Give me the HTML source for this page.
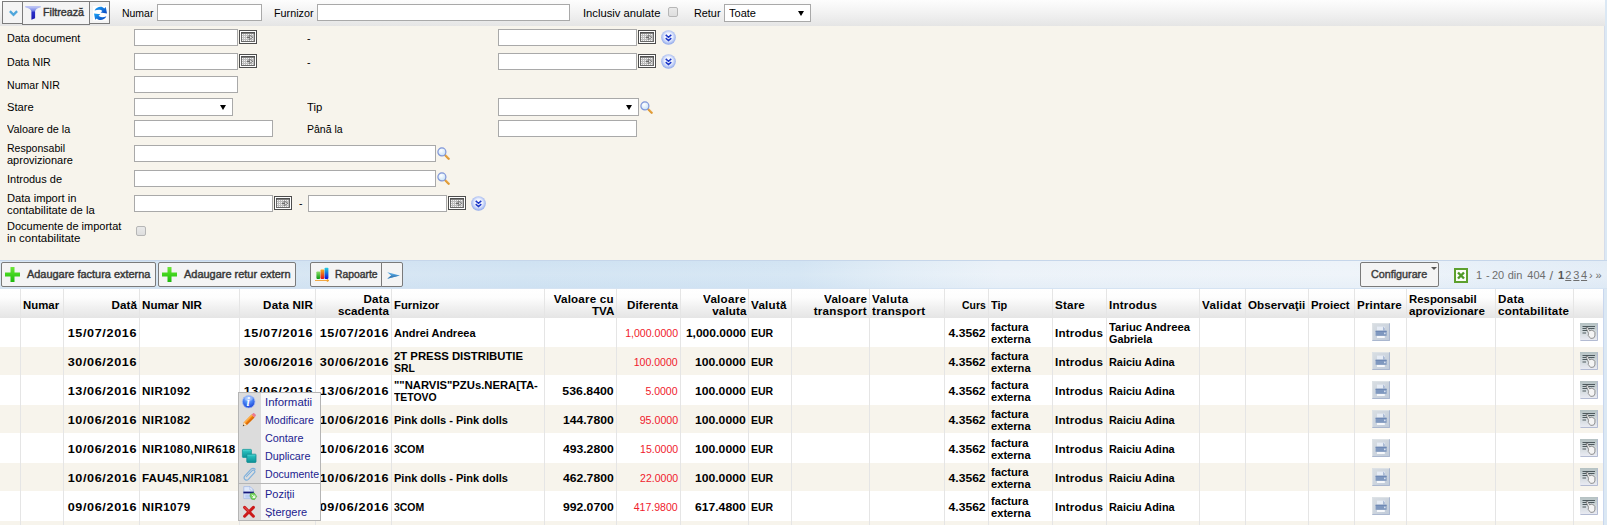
<!DOCTYPE html>
<html><head><meta charset="utf-8"><title>NIR</title><style>
*{box-sizing:border-box;}
html,body{margin:0;padding:0;}
body{width:1607px;height:525px;overflow:hidden;position:relative;background:#dbe8f4;font-family:"Liberation Sans",sans-serif;font-size:10px;color:#000;}
#page{position:absolute;left:0;top:0;width:1607px;height:525px;overflow:hidden;}
#topbar{position:absolute;left:0;top:0;width:1605px;height:26px;background:linear-gradient(to bottom,#fdfdfd 0%,#f3f3f3 45%,#e5e5e5 100%);}
#filter{position:absolute;left:0;top:26px;width:1605px;height:234px;background:#f7f4ec;border-right:1px solid #d5dcea;}
#bluebar{position:absolute;left:0;top:260px;width:1607px;height:29px;background:linear-gradient(to bottom,rgba(255,255,255,0) 0%,rgba(255,255,255,0.12) 50%,rgba(200,220,240,0.15) 100%),linear-gradient(to right,#dbe8f4 0px,#d4e4f2 150px,#d2e3f2 400px,#cfe2f2 520px,#d2e4f3 800px,#e0ecf6 900px,#eaf1f8 1000px,#edf3f9 1350px,#e6eff8 1500px,#e2ecf6 1607px);border-top:1px solid #c6d6ea;border-bottom:1px solid #d5e3f2;}
.lbl{position:absolute;white-space:nowrap;font-size:10px;line-height:12px;color:#000;}
.inp{position:absolute;background:#fff;border:1px solid #a9a9a9;height:17px;}
.sel{position:absolute;background:#fff;border:1px solid #a9a9a9;height:18px;}
.sel:after{content:"";position:absolute;right:6px;top:6px;border-left:3px solid transparent;border-right:3px solid transparent;border-top:5px solid #000;}
.chk{position:absolute;width:10px;height:10px;border:1px solid #b6b6b6;border-radius:2px;background:linear-gradient(#e9e9e9,#dedede);}
.btn{position:absolute;border:1px solid #7a7a7a;border-radius:2px;background:#f4f4f4;}
.btn.tb{border-radius:0;background:#f4f4f4;border-color:#7c7c7c;}
.btn .t{position:absolute;white-space:nowrap;font-size:10px;line-height:12px;color:#3a3a3a;-webkit-text-stroke:0.4px #3a3a3a;}
svg{position:absolute;overflow:visible;}
.x{display:inline-block;white-space:nowrap;}
#grid{position:absolute;left:0;top:289px;width:1603px;height:236px;background:#fff;overflow:hidden;}
.hd{position:absolute;left:0;top:0;width:1604px;height:29px;background:linear-gradient(to bottom,#ffffff 0%,#fdfdfd 30%,#f1f1f1 62%,#e5e5e5 100%);}
.row{position:absolute;left:0;width:1604px;height:29px;}
.row.alt{background:#f7f4ec;height:28px;}
.vl{position:absolute;top:0;width:1px;height:236px;background:#e5e5e5;}
.c{position:absolute;font-weight:bold;font-size:10px;line-height:12px;white-space:nowrap;color:#000;}
.r{text-align:right;}
.red{color:#f0202c;font-weight:normal;}
.pg{position:absolute;top:8px;font-size:11px;line-height:13px;color:#6e6e6e;white-space:nowrap;}
#menu{position:absolute;left:238px;top:392px;width:83px;height:129px;background:#f9f9f9;border:1px solid #b5b5b5;}
#menu .strip{position:absolute;left:0;top:0;width:22px;height:127px;background:#dcdcdc;}
#menu .mi{position:absolute;left:26px;font-size:10px;line-height:12px;color:#22228f;white-space:nowrap;}
#menu .sep{position:absolute;left:0;top:90px;width:81px;height:1px;background:#b5b5b5;}
</style></head><body><div id="page">
<div id="topbar">
<div class="btn tb" style="left:2px;top:1px;width:21px;height:23px"><svg style="left:6px;top:8px" width="9" height="7" viewBox="0 0 9 7"><path d="M0.9 1.1L4.5 4.9L8.1 1.1" fill="none" stroke="#4fa6db" stroke-width="2.3"/></svg></div>
<div class="btn tb" style="left:89px;top:1px;width:21px;height:23px"><svg style="left:3px;top:3.5px" width="15" height="15" viewBox="0 0 15 15"><defs><linearGradient id="rg" x1="0" y1="0" x2="1" y2="1"><stop offset="0" stop-color="#1aa4f6"/><stop offset="1" stop-color="#0a44c0"/></linearGradient><linearGradient id="rg2" x1="0" y1="0" x2="1" y2="1"><stop offset="0" stop-color="#1aa4f6"/><stop offset="1" stop-color="#0a44c0"/></linearGradient></defs><rect x="0" y="0" width="14.5" height="14.6" fill="#fff"/>
<path d="M1.6 4.6C3.6 0.4 9 -0.2 11.2 2.4L12.8 1L14 7.4L7.6 6.6L9.4 5C8 3.2 4.4 3.4 1.6 4.6z" fill="url(#rg)"/>
<path d="M13.4 10.2C11.4 14.4 6 15 3.8 12.4L2.2 13.8L1 7.4L7.4 8.2L5.6 9.8C7 11.6 10.6 11.4 13.4 10.2z" fill="url(#rg2)"/>
</svg></div>
<div class="btn tb" style="left:22px;top:1px;width:68px;height:24px"><svg style="left:2px;top:4px" width="16" height="14" viewBox="0 0 16 14"><defs><linearGradient id="fg" x1="0" y1="0" x2="0" y2="1"><stop offset="0" stop-color="#c9d0f7"/><stop offset="0.3" stop-color="#7f8cea"/><stop offset="0.45" stop-color="#2a2fc8"/><stop offset="1" stop-color="#1c1cb0"/></linearGradient></defs><path d="M0.2 0.3H15.8L15.6 1.2C12.6 2 10.4 3.2 10.1 5.2V12.2L6.4 13.7V5.2C6.1 3.2 3.4 2 0.4 1.2z" fill="url(#fg)"/><path d="M0.2 0.3H15.8L15.5 1.3H0.5z" fill="#b4bdf2"/></svg><span class="t" style="left:19.5px;top:5px;color:#333"><span class="x" style="transform:scaleX(1.069);transform-origin:0 50%;">Filtrează</span></span></div>
<div class="lbl" style="left:122px;top:8px;"><span class="x" style="transform:scaleX(1.046);transform-origin:0 50%;">Numar</span></div>
<div class="inp" style="left:157px;top:4px;width:105px"></div>
<div class="lbl" style="left:274px;top:8px;"><span class="x" style="transform:scaleX(1.077);transform-origin:0 50%;">Furnizor</span></div>
<div class="inp" style="left:317px;top:4px;width:253px"></div>
<div class="lbl" style="left:583px;top:8px;"><span class="x" style="transform:scaleX(1.124);transform-origin:0 50%;">Inclusiv anulate</span></div>
<div class="chk" style="left:668px;top:7px"></div>
<div class="lbl" style="left:694px;top:8px;"><span class="x" style="transform:scaleX(1.084);transform-origin:0 50%;">Retur</span></div>
<div class="sel" style="left:724px;top:4px;width:87px"><span class="lbl" style="left:4px;top:3px"><span class="x" style="transform:scaleX(1.103);transform-origin:0 50%;">Toate</span></span></div>
</div>
<div id="filter">
<div class="lbl" style="left:7px;top:7px;"><span class="x" style="transform:scaleX(1.081);transform-origin:0 50%;">Data document</span></div>
<div class="inp" style="left:134px;top:3px;width:104px;height:17px"></div>
<svg style="left:239px;top:4px" width="18" height="14" viewBox="0 0 18 14"><rect x="0.5" y="0.5" width="17" height="13" fill="#ffffff" stroke="#4d4d4d"/><rect x="2.5" y="2.5" width="13" height="9" fill="#f4f4f4" stroke="#6a6a6a"/><rect x="2" y="2" width="14" height="1.7" fill="#505050"/><path d="M3 5.5H15M3 7.5H15M3 9.5H15M4.5 4V11M6.5 4V11M8.5 4V11M10.5 4V11M12.5 4V11M14.5 4V11" stroke="#bdbdbd" stroke-width="1" fill="none"/><path d="M10.2 5L14 7.3L10.2 9.6z" fill="#e4e4e4" stroke="#707070" stroke-width="0.9"/><path d="M8 7.3h3" stroke="#606060" stroke-width="1.1"/></svg>
<div class="lbl" style="left:307px;top:7px;"><span class="x" style="transform:scaleX(1.05);transform-origin:0 50%;">-</span></div>
<div class="inp" style="left:498px;top:3px;width:139px;height:17px"></div>
<svg style="left:638px;top:4px" width="18" height="14" viewBox="0 0 18 14"><rect x="0.5" y="0.5" width="17" height="13" fill="#ffffff" stroke="#4d4d4d"/><rect x="2.5" y="2.5" width="13" height="9" fill="#f4f4f4" stroke="#6a6a6a"/><rect x="2" y="2" width="14" height="1.7" fill="#505050"/><path d="M3 5.5H15M3 7.5H15M3 9.5H15M4.5 4V11M6.5 4V11M8.5 4V11M10.5 4V11M12.5 4V11M14.5 4V11" stroke="#bdbdbd" stroke-width="1" fill="none"/><path d="M10.2 5L14 7.3L10.2 9.6z" fill="#e4e4e4" stroke="#707070" stroke-width="0.9"/><path d="M8 7.3h3" stroke="#606060" stroke-width="1.1"/></svg>
<svg style="left:661px;top:4px" width="15" height="15" viewBox="0 0 15 15"><defs><radialGradient id="g1" cx="50%" cy="45%" r="52%"><stop offset="0" stop-color="#ffffff"/><stop offset="0.5" stop-color="#eef2fd"/><stop offset="0.78" stop-color="#bccbf5"/><stop offset="1" stop-color="#94abeb"/></radialGradient></defs><circle cx="7.5" cy="7.5" r="7.3" fill="url(#g1)"/><path d="M4.7 4.9L7.5 7.4L10.3 4.9M4.7 8.1L7.5 10.6L10.3 8.1" fill="none" stroke="#1b36c6" stroke-width="1.45"/></svg>
<div class="lbl" style="left:7px;top:31px;"><span class="x" style="transform:scaleX(1.065);transform-origin:0 50%;">Data NIR</span></div>
<div class="inp" style="left:134px;top:27px;width:104px;height:17px"></div>
<svg style="left:239px;top:28px" width="18" height="14" viewBox="0 0 18 14"><rect x="0.5" y="0.5" width="17" height="13" fill="#ffffff" stroke="#4d4d4d"/><rect x="2.5" y="2.5" width="13" height="9" fill="#f4f4f4" stroke="#6a6a6a"/><rect x="2" y="2" width="14" height="1.7" fill="#505050"/><path d="M3 5.5H15M3 7.5H15M3 9.5H15M4.5 4V11M6.5 4V11M8.5 4V11M10.5 4V11M12.5 4V11M14.5 4V11" stroke="#bdbdbd" stroke-width="1" fill="none"/><path d="M10.2 5L14 7.3L10.2 9.6z" fill="#e4e4e4" stroke="#707070" stroke-width="0.9"/><path d="M8 7.3h3" stroke="#606060" stroke-width="1.1"/></svg>
<div class="lbl" style="left:307px;top:31px;"><span class="x" style="transform:scaleX(1.05);transform-origin:0 50%;">-</span></div>
<div class="inp" style="left:498px;top:27px;width:139px;height:17px"></div>
<svg style="left:638px;top:28px" width="18" height="14" viewBox="0 0 18 14"><rect x="0.5" y="0.5" width="17" height="13" fill="#ffffff" stroke="#4d4d4d"/><rect x="2.5" y="2.5" width="13" height="9" fill="#f4f4f4" stroke="#6a6a6a"/><rect x="2" y="2" width="14" height="1.7" fill="#505050"/><path d="M3 5.5H15M3 7.5H15M3 9.5H15M4.5 4V11M6.5 4V11M8.5 4V11M10.5 4V11M12.5 4V11M14.5 4V11" stroke="#bdbdbd" stroke-width="1" fill="none"/><path d="M10.2 5L14 7.3L10.2 9.6z" fill="#e4e4e4" stroke="#707070" stroke-width="0.9"/><path d="M8 7.3h3" stroke="#606060" stroke-width="1.1"/></svg>
<svg style="left:661px;top:28px" width="15" height="15" viewBox="0 0 15 15"><defs><radialGradient id="g2" cx="50%" cy="45%" r="52%"><stop offset="0" stop-color="#ffffff"/><stop offset="0.5" stop-color="#eef2fd"/><stop offset="0.78" stop-color="#bccbf5"/><stop offset="1" stop-color="#94abeb"/></radialGradient></defs><circle cx="7.5" cy="7.5" r="7.3" fill="url(#g2)"/><path d="M4.7 4.9L7.5 7.4L10.3 4.9M4.7 8.1L7.5 10.6L10.3 8.1" fill="none" stroke="#1b36c6" stroke-width="1.45"/></svg>
<div class="lbl" style="left:7px;top:54px;"><span class="x" style="transform:scaleX(1.056);transform-origin:0 50%;">Numar NIR</span></div>
<div class="inp" style="left:134px;top:50px;width:104px;height:17px"></div>
<div class="lbl" style="left:7px;top:76px;"><span class="x" style="transform:scaleX(1.117);transform-origin:0 50%;">Stare</span></div>
<div class="sel" style="left:134px;top:72px;width:99px"></div>
<div class="lbl" style="left:307px;top:76px;"><span class="x" style="transform:scaleX(1.131);transform-origin:0 50%;">Tip</span></div>
<div class="sel" style="left:498px;top:72px;width:141px"></div>
<svg style="left:639.5px;top:75px" width="13" height="13" viewBox="0 0 13 13"><defs><radialGradient id="g3" cx="40%" cy="35%" r="70%"><stop offset="0" stop-color="#ffffff"/><stop offset="1" stop-color="#c4e0f7"/></radialGradient></defs><path d="M8 8L11.7 11.7" stroke="#dd962f" stroke-width="2.3" stroke-linecap="round"/><path d="M8.3 7.6L11.9 11.2" stroke="#f3c070" stroke-width="0.7" stroke-linecap="round"/><circle cx="4.9" cy="4.9" r="4" fill="url(#g3)" stroke="#7f95d8" stroke-width="1.2"/></svg>
<div class="lbl" style="left:7px;top:98px;"><span class="x" style="transform:scaleX(1.088);transform-origin:0 50%;">Valoare de la</span></div>
<div class="inp" style="left:134px;top:94px;width:139px;height:17px"></div>
<div class="lbl" style="left:307px;top:98px;"><span class="x" style="transform:scaleX(1.052);transform-origin:0 50%;">Până la</span></div>
<div class="inp" style="left:498px;top:94px;width:139px;height:17px"></div>
<div class="lbl" style="left:7px;top:117px;"><span class="x" style="transform:scaleX(1.054);transform-origin:0 50%;">Responsabil</span><br><span class="x" style="transform:scaleX(1.099);transform-origin:0 50%;">aprovizionare</span></div>
<div class="inp" style="left:134px;top:119px;width:302px;height:17px"></div>
<svg style="left:437px;top:121px" width="13" height="13" viewBox="0 0 13 13"><defs><radialGradient id="g4" cx="40%" cy="35%" r="70%"><stop offset="0" stop-color="#ffffff"/><stop offset="1" stop-color="#c4e0f7"/></radialGradient></defs><path d="M8 8L11.7 11.7" stroke="#dd962f" stroke-width="2.3" stroke-linecap="round"/><path d="M8.3 7.6L11.9 11.2" stroke="#f3c070" stroke-width="0.7" stroke-linecap="round"/><circle cx="4.9" cy="4.9" r="4" fill="url(#g4)" stroke="#7f95d8" stroke-width="1.2"/></svg>
<div class="lbl" style="left:7px;top:148px;"><span class="x" style="transform:scaleX(1.099);transform-origin:0 50%;">Introdus de</span></div>
<div class="inp" style="left:134px;top:144px;width:302px;height:17px"></div>
<svg style="left:437px;top:146px" width="13" height="13" viewBox="0 0 13 13"><defs><radialGradient id="g5" cx="40%" cy="35%" r="70%"><stop offset="0" stop-color="#ffffff"/><stop offset="1" stop-color="#c4e0f7"/></radialGradient></defs><path d="M8 8L11.7 11.7" stroke="#dd962f" stroke-width="2.3" stroke-linecap="round"/><path d="M8.3 7.6L11.9 11.2" stroke="#f3c070" stroke-width="0.7" stroke-linecap="round"/><circle cx="4.9" cy="4.9" r="4" fill="url(#g5)" stroke="#7f95d8" stroke-width="1.2"/></svg>
<div class="lbl" style="left:7px;top:167px;"><span class="x" style="transform:scaleX(1.115);transform-origin:0 50%;">Data import in</span><br><span class="x" style="transform:scaleX(1.128);transform-origin:0 50%;">contabilitate de la</span></div>
<div class="inp" style="left:134px;top:169px;width:139px;height:17px"></div>
<svg style="left:274px;top:170px" width="18" height="14" viewBox="0 0 18 14"><rect x="0.5" y="0.5" width="17" height="13" fill="#ffffff" stroke="#4d4d4d"/><rect x="2.5" y="2.5" width="13" height="9" fill="#f4f4f4" stroke="#6a6a6a"/><rect x="2" y="2" width="14" height="1.7" fill="#505050"/><path d="M3 5.5H15M3 7.5H15M3 9.5H15M4.5 4V11M6.5 4V11M8.5 4V11M10.5 4V11M12.5 4V11M14.5 4V11" stroke="#bdbdbd" stroke-width="1" fill="none"/><path d="M10.2 5L14 7.3L10.2 9.6z" fill="#e4e4e4" stroke="#707070" stroke-width="0.9"/><path d="M8 7.3h3" stroke="#606060" stroke-width="1.1"/></svg>
<div class="lbl" style="left:299px;top:172px;"><span class="x" style="transform:scaleX(1.05);transform-origin:0 50%;">-</span></div>
<div class="inp" style="left:308px;top:169px;width:139px;height:17px"></div>
<svg style="left:448px;top:170px" width="18" height="14" viewBox="0 0 18 14"><rect x="0.5" y="0.5" width="17" height="13" fill="#ffffff" stroke="#4d4d4d"/><rect x="2.5" y="2.5" width="13" height="9" fill="#f4f4f4" stroke="#6a6a6a"/><rect x="2" y="2" width="14" height="1.7" fill="#505050"/><path d="M3 5.5H15M3 7.5H15M3 9.5H15M4.5 4V11M6.5 4V11M8.5 4V11M10.5 4V11M12.5 4V11M14.5 4V11" stroke="#bdbdbd" stroke-width="1" fill="none"/><path d="M10.2 5L14 7.3L10.2 9.6z" fill="#e4e4e4" stroke="#707070" stroke-width="0.9"/><path d="M8 7.3h3" stroke="#606060" stroke-width="1.1"/></svg>
<svg style="left:471px;top:170px" width="15" height="15" viewBox="0 0 15 15"><defs><radialGradient id="g6" cx="50%" cy="45%" r="52%"><stop offset="0" stop-color="#ffffff"/><stop offset="0.5" stop-color="#eef2fd"/><stop offset="0.78" stop-color="#bccbf5"/><stop offset="1" stop-color="#94abeb"/></radialGradient></defs><circle cx="7.5" cy="7.5" r="7.3" fill="url(#g6)"/><path d="M4.7 4.9L7.5 7.4L10.3 4.9M4.7 8.1L7.5 10.6L10.3 8.1" fill="none" stroke="#1b36c6" stroke-width="1.45"/></svg>
<div class="lbl" style="left:7px;top:195px;"><span class="x" style="transform:scaleX(1.1);transform-origin:0 50%;">Documente de importat</span><br><span class="x" style="transform:scaleX(1.148);transform-origin:0 50%;">in contabilitate</span></div>
<div class="chk" style="left:136px;top:200px"></div>
</div>
<div id="bluebar">
<div class="btn" style="left:1px;top:1px;width:155px;height:25px;"><svg style="left:3px;top:4px" width="15" height="15" viewBox="0 0 15 15"><defs><linearGradient id="g7" x1="0" y1="0" x2="0" y2="1"><stop offset="0" stop-color="#6fe63a"/><stop offset="0.5" stop-color="#3fd41c"/><stop offset="1" stop-color="#1fb80e"/></linearGradient></defs><path d="M5.5 0h4v5.5H15v4H9.5V15h-4V9.5H0v-4h5.5z" fill="url(#g7)"/></svg><span class="t" style="left:25px;top:6px;color:#333"><span class="x" style="transform:scaleX(1.093);transform-origin:0 50%;">Adaugare factura externa</span></span></div>
<div class="btn" style="left:158px;top:1px;width:138px;height:25px;"><svg style="left:3px;top:4px" width="15" height="15" viewBox="0 0 15 15"><defs><linearGradient id="g8" x1="0" y1="0" x2="0" y2="1"><stop offset="0" stop-color="#6fe63a"/><stop offset="0.5" stop-color="#3fd41c"/><stop offset="1" stop-color="#1fb80e"/></linearGradient></defs><path d="M5.5 0h4v5.5H15v4H9.5V15h-4V9.5H0v-4h5.5z" fill="url(#g8)"/></svg><span class="t" style="left:25px;top:6px;color:#333"><span class="x" style="transform:scaleX(1.096);transform-origin:0 50%;">Adaugare retur extern</span></span></div>
<div class="btn" style="left:310px;top:1px;width:72px;height:25px;border-radius:2px 0 0 2px"><svg style="left:4px;top:4px" width="15" height="15" viewBox="0 0 15 15"><defs><linearGradient id="c1" x1="0" y1="0" x2="0" y2="1"><stop offset="0" stop-color="#8fe06a"/><stop offset="1" stop-color="#0a9a10"/></linearGradient><linearGradient id="c2" x1="0" y1="0" x2="0" y2="1"><stop offset="0" stop-color="#f6b020"/><stop offset="1" stop-color="#e81010"/></linearGradient><linearGradient id="c3" x1="0" y1="0" x2="0" y2="1"><stop offset="0" stop-color="#22d0e0"/><stop offset="1" stop-color="#1010d8"/></linearGradient></defs><rect x="1.4" y="4.5" width="3.8" height="7.4" rx="0.8" fill="url(#c1)"/><rect x="5.5" y="2.6" width="3.8" height="9.3" rx="0.8" fill="url(#c2)"/><rect x="9.6" y="0.8" width="3.8" height="11.1" rx="0.8" fill="url(#c3)"/><path d="M0 13.5H12.6M12 12.6L14 13.5L12 14.4z" stroke="#f0a030" stroke-width="0.9" fill="#f0a030"/></svg><span class="t" style="left:23.5px;top:6px;color:#333"><span class="x" style="transform:scaleX(1.035);transform-origin:0 50%;">Rapoarte</span></span></div>
<div class="btn" style="left:381px;top:1px;width:22px;height:25px;border-radius:0 2px 2px 0"><svg style="left:4.5px;top:8.5px" width="13" height="7" viewBox="0 0 13 7"><path d="M0.3 0.2L12.8 3.4L0.3 6.8L4.2 3.5z" fill="#4f9fda"/><path d="M4.2 3.5L12.8 3.4L0.3 6.8z" fill="#3d7fb8"/></svg></div>
<div class="btn" style="left:1360px;top:1px;width:79px;height:25px;"><span class="t" style="left:10px;top:6px;color:#444"><span class="x" style="transform:scaleX(1.075);transform-origin:0 50%;">Configurare</span></span><svg style="left:70px;top:4px" width="6" height="3" viewBox="0 0 6 3"><path d="M0 0H6L3 3z" fill="#555"/></svg></div>
<svg style="left:1454px;top:7px" width="14" height="15" viewBox="0 0 14 15"><rect x="1" y="1" width="12" height="13" fill="#fbfdf9" stroke="#5da02e" stroke-width="2"/><path d="M4 4.5L10 10.5M10 4.5L4 10.5" stroke="#4e9a28" stroke-width="2.4"/></svg>
<div class="pg" style="left:1476.1px;">1</div>
<div class="pg" style="left:1485.9px;">-</div>
<div class="pg" style="left:1491.9px;">20</div>
<div class="pg" style="left:1507.7px;">din</div>
<div class="pg" style="left:1527.3px;">404</div>
<div class="pg" style="left:1549.5px;font-size:13px;">/</div>
<div class="pg" style="left:1558.0px;font-weight:bold;color:#555;">1</div>
<div class="pg" style="left:1565.2px;text-decoration:underline;">2</div>
<div class="pg" style="left:1573.3px;text-decoration:underline;">3</div>
<div class="pg" style="left:1581.0px;text-decoration:underline;">4</div>
<div class="pg" style="left:1589.1px;">›</div>
<div class="pg" style="left:1595.5px;">»</div>
</div>
<div id="grid">
<div class="hd"></div>
<svg width="0" height="0" style="left:0;top:0"><defs><linearGradient id="pbg" x1="0" y1="0" x2="1" y2="1"><stop offset="0" stop-color="#dadfe3"/><stop offset="1" stop-color="#bfcad9"/></linearGradient><linearGradient id="hbg" x1="0" y1="0" x2="0" y2="1"><stop offset="0" stop-color="#b4c1c2"/><stop offset="0.5" stop-color="#d2d9dd"/><stop offset="1" stop-color="#ecedf5"/></linearGradient></defs></svg>
<div class="row" style="top:29px"></div>
<div class="row alt" style="top:58px"></div>
<div class="row" style="top:87px"></div>
<div class="row alt" style="top:116px"></div>
<div class="row" style="top:145px"></div>
<div class="row alt" style="top:174px"></div>
<div class="row" style="top:203px"></div>
<div class="row alt" style="top:232px"></div>
<div class="vl" style="left:20px"></div>
<div class="vl" style="left:63px"></div>
<div class="vl" style="left:139px"></div>
<div class="vl" style="left:239px"></div>
<div class="vl" style="left:315px"></div>
<div class="vl" style="left:391px"></div>
<div class="vl" style="left:544px"></div>
<div class="vl" style="left:616px"></div>
<div class="vl" style="left:680px"></div>
<div class="vl" style="left:748px"></div>
<div class="vl" style="left:791px"></div>
<div class="vl" style="left:869px"></div>
<div class="vl" style="left:944px"></div>
<div class="vl" style="left:988px"></div>
<div class="vl" style="left:1052px"></div>
<div class="vl" style="left:1106px"></div>
<div class="vl" style="left:1199px"></div>
<div class="vl" style="left:1245px"></div>
<div class="vl" style="left:1308px"></div>
<div class="vl" style="left:1354px"></div>
<div class="vl" style="left:1406px"></div>
<div class="vl" style="left:1495px"></div>
<div class="vl" style="left:1573px"></div>
<div class="vl" style="left:1603px"></div>
<div class="c " style="left:23px;top:10.5px"><span class="x" style="transform:scaleX(1.139);transform-origin:0 50%;">Numar</span></div>
<div class="c r " style="left:63px;width:74px;top:10.5px"><span class="x" style="transform:scaleX(1.16);transform-origin:100% 50%;letter-spacing:0.13px;margin-right:-0.13px;">Dată</span></div>
<div class="c " style="left:142px;top:10.5px"><span class="x" style="transform:scaleX(1.16);transform-origin:0 50%;">Numar NIR</span></div>
<div class="c r " style="left:239px;width:74px;top:10.5px"><span class="x" style="transform:scaleX(1.16);transform-origin:100% 50%;letter-spacing:0.18px;margin-right:-0.18px;">Data NIR</span></div>
<div class="c r " style="left:315px;width:74px;top:4.5px"><span class="x" style="transform:scaleX(1.16);transform-origin:100% 50%;letter-spacing:0.24px;margin-right:-0.24px;">Data</span><br><span class="x" style="transform:scaleX(1.16);transform-origin:100% 50%;letter-spacing:0.09px;margin-right:-0.09px;">scadenta</span></div>
<div class="c " style="left:394px;top:10.5px"><span class="x" style="transform:scaleX(1.132);transform-origin:0 50%;">Furnizor</span></div>
<div class="c r " style="left:544px;width:70px;top:4.5px"><span class="x" style="transform:scaleX(1.16);transform-origin:100% 50%;letter-spacing:0.17px;margin-right:-0.17px;">Valoare cu</span><br><span class="x" style="transform:scaleX(1.16);transform-origin:100% 50%;letter-spacing:0.02px;margin-right:-0.02px;">TVA</span></div>
<div class="c r " style="left:616px;width:62px;top:10.5px"><span class="x" style="transform:scaleX(1.16);transform-origin:100% 50%;letter-spacing:0.08px;margin-right:-0.08px;">Diferenta</span></div>
<div class="c r " style="left:680px;width:66px;top:4.5px"><span class="x" style="transform:scaleX(1.16);transform-origin:100% 50%;letter-spacing:0.22px;margin-right:-0.22px;">Valoare</span><br><span class="x" style="transform:scaleX(1.16);transform-origin:100% 50%;letter-spacing:0.1px;margin-right:-0.1px;">valuta</span></div>
<div class="c " style="left:751px;top:10.5px"><span class="x" style="transform:scaleX(1.16);transform-origin:0 50%;letter-spacing:0.24px;">Valută</span></div>
<div class="c r " style="left:791px;width:76px;top:4.5px"><span class="x" style="transform:scaleX(1.16);transform-origin:100% 50%;letter-spacing:0.22px;margin-right:-0.22px;">Valoare</span><br><span class="x" style="transform:scaleX(1.16);transform-origin:100% 50%;letter-spacing:0.23px;margin-right:-0.23px;">transport</span></div>
<div class="c " style="left:872px;top:4.5px"><span class="x" style="transform:scaleX(1.16);transform-origin:0 50%;letter-spacing:0.33px;">Valuta</span><br><span class="x" style="transform:scaleX(1.16);transform-origin:0 50%;letter-spacing:0.23px;">transport</span></div>
<div class="c r " style="left:944px;width:42px;top:10.5px"><span class="x" style="transform:scaleX(1.04);transform-origin:100% 50%;">Curs</span></div>
<div class="c " style="left:991px;top:10.5px"><span class="x" style="transform:scaleX(1.093);transform-origin:0 50%;">Tip</span></div>
<div class="c " style="left:1055px;top:10.5px"><span class="x" style="transform:scaleX(1.16);transform-origin:0 50%;letter-spacing:0.17px;">Stare</span></div>
<div class="c " style="left:1109px;top:10.5px"><span class="x" style="transform:scaleX(1.16);transform-origin:0 50%;letter-spacing:0.18px;">Introdus</span></div>
<div class="c " style="left:1202px;top:10.5px"><span class="x" style="transform:scaleX(1.16);transform-origin:0 50%;letter-spacing:0.29px;">Validat</span></div>
<div class="c " style="left:1248px;top:10.5px"><span class="x" style="transform:scaleX(1.16);transform-origin:0 50%;letter-spacing:0.05px;">Observaţii</span></div>
<div class="c " style="left:1311px;top:10.5px"><span class="x" style="transform:scaleX(1.138);transform-origin:0 50%;">Proiect</span></div>
<div class="c " style="left:1357px;top:10.5px"><span class="x" style="transform:scaleX(1.16);transform-origin:0 50%;letter-spacing:0.12px;">Printare</span></div>
<div class="c " style="left:1409px;top:4.5px"><span class="x" style="transform:scaleX(1.138);transform-origin:0 50%;">Responsabil</span><br><span class="x" style="transform:scaleX(1.16);transform-origin:0 50%;letter-spacing:0.03px;">aprovizionare</span></div>
<div class="c " style="left:1498px;top:4.5px"><span class="x" style="transform:scaleX(1.16);transform-origin:0 50%;letter-spacing:0.24px;">Data</span><br><span class="x" style="transform:scaleX(1.16);transform-origin:0 50%;letter-spacing:0.19px;">contabilitate</span></div>
<div class="c r " style="left:63px;width:74px;top:38.5px"><span class="x" style="transform:scaleX(1.26);transform-origin:100% 50%;letter-spacing:0.5px;margin-right:-0.5px;">15/07/2016</span></div>
<div class="c r " style="left:239px;width:74px;top:38.5px"><span class="x" style="transform:scaleX(1.26);transform-origin:100% 50%;letter-spacing:0.5px;margin-right:-0.5px;">15/07/2016</span></div>
<div class="c r " style="left:315px;width:74px;top:38.5px"><span class="x" style="transform:scaleX(1.26);transform-origin:100% 50%;letter-spacing:0.5px;margin-right:-0.5px;">15/07/2016</span></div>
<div class="c " style="left:394px;top:38.5px"><span class="x" style="transform:scaleX(1.1);transform-origin:0 50%;">Andrei Andreea</span></div>
<div class="c r red" style="left:616px;width:62px;top:38.5px"><span class="x" style="transform:scaleX(1.057);transform-origin:100% 50%;">1,000.0000</span></div>
<div class="c r " style="left:680px;width:66px;top:38.5px"><span class="x" style="transform:scaleX(1.202);transform-origin:100% 50%;">1,000.0000</span></div>
<div class="c " style="left:751px;top:38.5px"><span class="x" style="transform:scaleX(1.051);transform-origin:0 50%;">EUR</span></div>
<div class="c r " style="left:944px;width:42px;top:38.5px"><span class="x" style="transform:scaleX(1.209);transform-origin:100% 50%;">4.3562</span></div>
<div class="c " style="left:991px;top:32.5px"><span class="x" style="transform:scaleX(1.124);transform-origin:0 50%;">factura</span><br><span class="x" style="transform:scaleX(1.113);transform-origin:0 50%;">externa</span></div>
<div class="c " style="left:1055px;top:38.5px"><span class="x" style="transform:scaleX(1.16);transform-origin:0 50%;letter-spacing:0.18px;">Introdus</span></div>
<div class="c " style="left:1109px;top:32.5px"><span class="x" style="transform:scaleX(1.13);transform-origin:0 50%;">Tariuc Andreea</span><br><span class="x" style="transform:scaleX(1.082);transform-origin:0 50%;">Gabriela</span></div>
<svg style="left:1372px;top:34px" width="18" height="18" viewBox="0 0 18 18"><rect x="0" y="0" width="18" height="18" fill="url(#pbg)"/><path d="M0.5 17.5H17.5V0.5" fill="none" stroke="#aab7cf"/><path d="M0.5 17V0.5H17" fill="none" stroke="#dde2e6"/><rect x="5" y="3.6" width="7.8" height="4" fill="#e6ecf5"/><path d="M11 3.6l1.8 1.6v2.4h-1.8z" fill="#a9b9d4"/><rect x="3.6" y="7.8" width="11" height="5" fill="#7f98bf"/><rect x="3.6" y="7.8" width="11" height="1" fill="#6b86b2"/><rect x="12" y="9.6" width="1.6" height="1.6" fill="#d4deee"/><rect x="5" y="13" width="7.8" height="2" fill="#f6f8fb"/></svg>
<svg style="left:1580px;top:34px" width="18" height="18" viewBox="0 0 18 18"><rect x="0" y="0" width="18" height="18" fill="url(#hbg)"/><path d="M0.5 17.5H17.5V0.5" fill="none" stroke="#b3bbd2"/><path d="M2.5 3.5H15M2.5 5.5H14.5M2.5 7.5H7M2.5 10H6" stroke="#4e5a5e" stroke-width="1"/><path d="M6 4.6L7.6 4.4L9.7 8L11.2 7.2L12.6 7.6L13.9 8.1L14.9 9.6V13L13.6 15.1L10.6 15.4L8.2 12.4L8.6 10.3z" fill="#f4f4f4" stroke="#6a6a6a" stroke-width="0.7"/></svg>
<div class="c r " style="left:63px;width:74px;top:67.5px"><span class="x" style="transform:scaleX(1.26);transform-origin:100% 50%;letter-spacing:0.5px;margin-right:-0.5px;">30/06/2016</span></div>
<div class="c r " style="left:239px;width:74px;top:67.5px"><span class="x" style="transform:scaleX(1.26);transform-origin:100% 50%;letter-spacing:0.5px;margin-right:-0.5px;">30/06/2016</span></div>
<div class="c r " style="left:315px;width:74px;top:67.5px"><span class="x" style="transform:scaleX(1.26);transform-origin:100% 50%;letter-spacing:0.5px;margin-right:-0.5px;">30/06/2016</span></div>
<div class="c " style="left:394px;top:61.5px"><span class="x" style="transform:scaleX(1.133);transform-origin:0 50%;">2T PRESS DISTRIBUTIE</span><br><span class="x" style="transform:scaleX(1.04);transform-origin:0 50%;">SRL</span></div>
<div class="c r red" style="left:616px;width:62px;top:67.5px"><span class="x" style="transform:scaleX(1.055);transform-origin:100% 50%;">100.0000</span></div>
<div class="c r " style="left:680px;width:66px;top:67.5px"><span class="x" style="transform:scaleX(1.218);transform-origin:100% 50%;">100.0000</span></div>
<div class="c " style="left:751px;top:67.5px"><span class="x" style="transform:scaleX(1.051);transform-origin:0 50%;">EUR</span></div>
<div class="c r " style="left:944px;width:42px;top:67.5px"><span class="x" style="transform:scaleX(1.209);transform-origin:100% 50%;">4.3562</span></div>
<div class="c " style="left:991px;top:61.5px"><span class="x" style="transform:scaleX(1.124);transform-origin:0 50%;">factura</span><br><span class="x" style="transform:scaleX(1.113);transform-origin:0 50%;">externa</span></div>
<div class="c " style="left:1055px;top:67.5px"><span class="x" style="transform:scaleX(1.16);transform-origin:0 50%;letter-spacing:0.18px;">Introdus</span></div>
<div class="c " style="left:1109px;top:67.5px"><span class="x" style="transform:scaleX(1.09);transform-origin:0 50%;">Raiciu Adina</span></div>
<svg style="left:1372px;top:63px" width="18" height="18" viewBox="0 0 18 18"><rect x="0" y="0" width="18" height="18" fill="url(#pbg)"/><path d="M0.5 17.5H17.5V0.5" fill="none" stroke="#aab7cf"/><path d="M0.5 17V0.5H17" fill="none" stroke="#dde2e6"/><rect x="5" y="3.6" width="7.8" height="4" fill="#e6ecf5"/><path d="M11 3.6l1.8 1.6v2.4h-1.8z" fill="#a9b9d4"/><rect x="3.6" y="7.8" width="11" height="5" fill="#7f98bf"/><rect x="3.6" y="7.8" width="11" height="1" fill="#6b86b2"/><rect x="12" y="9.6" width="1.6" height="1.6" fill="#d4deee"/><rect x="5" y="13" width="7.8" height="2" fill="#f6f8fb"/></svg>
<svg style="left:1580px;top:63px" width="18" height="18" viewBox="0 0 18 18"><rect x="0" y="0" width="18" height="18" fill="url(#hbg)"/><path d="M0.5 17.5H17.5V0.5" fill="none" stroke="#b3bbd2"/><path d="M2.5 3.5H15M2.5 5.5H14.5M2.5 7.5H7M2.5 10H6" stroke="#4e5a5e" stroke-width="1"/><path d="M6 4.6L7.6 4.4L9.7 8L11.2 7.2L12.6 7.6L13.9 8.1L14.9 9.6V13L13.6 15.1L10.6 15.4L8.2 12.4L8.6 10.3z" fill="#f4f4f4" stroke="#6a6a6a" stroke-width="0.7"/></svg>
<div class="c r " style="left:63px;width:74px;top:96.5px"><span class="x" style="transform:scaleX(1.26);transform-origin:100% 50%;letter-spacing:0.5px;margin-right:-0.5px;">13/06/2016</span></div>
<div class="c " style="left:142px;top:96.5px"><span class="x" style="transform:scaleX(1.16);transform-origin:0 50%;letter-spacing:0.36px;">NIR1092</span></div>
<div class="c r " style="left:239px;width:74px;top:96.5px"><span class="x" style="transform:scaleX(1.26);transform-origin:100% 50%;letter-spacing:0.5px;margin-right:-0.5px;">13/06/2016</span></div>
<div class="c r " style="left:315px;width:74px;top:96.5px"><span class="x" style="transform:scaleX(1.26);transform-origin:100% 50%;letter-spacing:0.5px;margin-right:-0.5px;">13/06/2016</span></div>
<div class="c " style="left:394px;top:90.5px"><span class="x" style="transform:scaleX(1.126);transform-origin:0 50%;">""NARVIS"PZUs.NERA[TA-</span><br><span class="x" style="transform:scaleX(1.043);transform-origin:0 50%;">TETOVO</span></div>
<div class="c r " style="left:544px;width:70px;top:96.5px"><span class="x" style="transform:scaleX(1.232);transform-origin:100% 50%;">536.8400</span></div>
<div class="c r red" style="left:616px;width:62px;top:96.5px"><span class="x" style="transform:scaleX(1.053);transform-origin:100% 50%;">5.0000</span></div>
<div class="c r " style="left:680px;width:66px;top:96.5px"><span class="x" style="transform:scaleX(1.218);transform-origin:100% 50%;">100.0000</span></div>
<div class="c " style="left:751px;top:96.5px"><span class="x" style="transform:scaleX(1.051);transform-origin:0 50%;">EUR</span></div>
<div class="c r " style="left:944px;width:42px;top:96.5px"><span class="x" style="transform:scaleX(1.209);transform-origin:100% 50%;">4.3562</span></div>
<div class="c " style="left:991px;top:90.5px"><span class="x" style="transform:scaleX(1.124);transform-origin:0 50%;">factura</span><br><span class="x" style="transform:scaleX(1.113);transform-origin:0 50%;">externa</span></div>
<div class="c " style="left:1055px;top:96.5px"><span class="x" style="transform:scaleX(1.16);transform-origin:0 50%;letter-spacing:0.18px;">Introdus</span></div>
<div class="c " style="left:1109px;top:96.5px"><span class="x" style="transform:scaleX(1.09);transform-origin:0 50%;">Raiciu Adina</span></div>
<svg style="left:1372px;top:92px" width="18" height="18" viewBox="0 0 18 18"><rect x="0" y="0" width="18" height="18" fill="url(#pbg)"/><path d="M0.5 17.5H17.5V0.5" fill="none" stroke="#aab7cf"/><path d="M0.5 17V0.5H17" fill="none" stroke="#dde2e6"/><rect x="5" y="3.6" width="7.8" height="4" fill="#e6ecf5"/><path d="M11 3.6l1.8 1.6v2.4h-1.8z" fill="#a9b9d4"/><rect x="3.6" y="7.8" width="11" height="5" fill="#7f98bf"/><rect x="3.6" y="7.8" width="11" height="1" fill="#6b86b2"/><rect x="12" y="9.6" width="1.6" height="1.6" fill="#d4deee"/><rect x="5" y="13" width="7.8" height="2" fill="#f6f8fb"/></svg>
<svg style="left:1580px;top:92px" width="18" height="18" viewBox="0 0 18 18"><rect x="0" y="0" width="18" height="18" fill="url(#hbg)"/><path d="M0.5 17.5H17.5V0.5" fill="none" stroke="#b3bbd2"/><path d="M2.5 3.5H15M2.5 5.5H14.5M2.5 7.5H7M2.5 10H6" stroke="#4e5a5e" stroke-width="1"/><path d="M6 4.6L7.6 4.4L9.7 8L11.2 7.2L12.6 7.6L13.9 8.1L14.9 9.6V13L13.6 15.1L10.6 15.4L8.2 12.4L8.6 10.3z" fill="#f4f4f4" stroke="#6a6a6a" stroke-width="0.7"/></svg>
<div class="c r " style="left:63px;width:74px;top:125.5px"><span class="x" style="transform:scaleX(1.26);transform-origin:100% 50%;letter-spacing:0.5px;margin-right:-0.5px;">10/06/2016</span></div>
<div class="c " style="left:142px;top:125.5px"><span class="x" style="transform:scaleX(1.16);transform-origin:0 50%;letter-spacing:0.35px;">NIR1082</span></div>
<div class="c r " style="left:239px;width:74px;top:125.5px"><span class="x" style="transform:scaleX(1.26);transform-origin:100% 50%;letter-spacing:0.5px;margin-right:-0.5px;">10/06/2016</span></div>
<div class="c r " style="left:315px;width:74px;top:125.5px"><span class="x" style="transform:scaleX(1.26);transform-origin:100% 50%;letter-spacing:0.5px;margin-right:-0.5px;">10/06/2016</span></div>
<div class="c " style="left:394px;top:125.5px"><span class="x" style="transform:scaleX(1.103);transform-origin:0 50%;">Pink dolls - Pink dolls</span></div>
<div class="c r " style="left:544px;width:70px;top:125.5px"><span class="x" style="transform:scaleX(1.218);transform-origin:100% 50%;">144.7800</span></div>
<div class="c r red" style="left:616px;width:62px;top:125.5px"><span class="x" style="transform:scaleX(1.065);transform-origin:100% 50%;">95.0000</span></div>
<div class="c r " style="left:680px;width:66px;top:125.5px"><span class="x" style="transform:scaleX(1.218);transform-origin:100% 50%;">100.0000</span></div>
<div class="c " style="left:751px;top:125.5px"><span class="x" style="transform:scaleX(1.051);transform-origin:0 50%;">EUR</span></div>
<div class="c r " style="left:944px;width:42px;top:125.5px"><span class="x" style="transform:scaleX(1.209);transform-origin:100% 50%;">4.3562</span></div>
<div class="c " style="left:991px;top:119.5px"><span class="x" style="transform:scaleX(1.124);transform-origin:0 50%;">factura</span><br><span class="x" style="transform:scaleX(1.113);transform-origin:0 50%;">externa</span></div>
<div class="c " style="left:1055px;top:125.5px"><span class="x" style="transform:scaleX(1.16);transform-origin:0 50%;letter-spacing:0.18px;">Introdus</span></div>
<div class="c " style="left:1109px;top:125.5px"><span class="x" style="transform:scaleX(1.09);transform-origin:0 50%;">Raiciu Adina</span></div>
<svg style="left:1372px;top:121px" width="18" height="18" viewBox="0 0 18 18"><rect x="0" y="0" width="18" height="18" fill="url(#pbg)"/><path d="M0.5 17.5H17.5V0.5" fill="none" stroke="#aab7cf"/><path d="M0.5 17V0.5H17" fill="none" stroke="#dde2e6"/><rect x="5" y="3.6" width="7.8" height="4" fill="#e6ecf5"/><path d="M11 3.6l1.8 1.6v2.4h-1.8z" fill="#a9b9d4"/><rect x="3.6" y="7.8" width="11" height="5" fill="#7f98bf"/><rect x="3.6" y="7.8" width="11" height="1" fill="#6b86b2"/><rect x="12" y="9.6" width="1.6" height="1.6" fill="#d4deee"/><rect x="5" y="13" width="7.8" height="2" fill="#f6f8fb"/></svg>
<svg style="left:1580px;top:121px" width="18" height="18" viewBox="0 0 18 18"><rect x="0" y="0" width="18" height="18" fill="url(#hbg)"/><path d="M0.5 17.5H17.5V0.5" fill="none" stroke="#b3bbd2"/><path d="M2.5 3.5H15M2.5 5.5H14.5M2.5 7.5H7M2.5 10H6" stroke="#4e5a5e" stroke-width="1"/><path d="M6 4.6L7.6 4.4L9.7 8L11.2 7.2L12.6 7.6L13.9 8.1L14.9 9.6V13L13.6 15.1L10.6 15.4L8.2 12.4L8.6 10.3z" fill="#f4f4f4" stroke="#6a6a6a" stroke-width="0.7"/></svg>
<div class="c r " style="left:63px;width:74px;top:154.5px"><span class="x" style="transform:scaleX(1.26);transform-origin:100% 50%;letter-spacing:0.5px;margin-right:-0.5px;">10/06/2016</span></div>
<div class="c " style="left:142px;top:154.5px"><span class="x" style="transform:scaleX(1.16);transform-origin:0 50%;letter-spacing:0.33px;">NIR1080,NIR618</span></div>
<div class="c r " style="left:239px;width:74px;top:154.5px"><span class="x" style="transform:scaleX(1.26);transform-origin:100% 50%;letter-spacing:0.5px;margin-right:-0.5px;">10/06/2016</span></div>
<div class="c r " style="left:315px;width:74px;top:154.5px"><span class="x" style="transform:scaleX(1.26);transform-origin:100% 50%;letter-spacing:0.5px;margin-right:-0.5px;">10/06/2016</span></div>
<div class="c " style="left:394px;top:154.5px"><span class="x" style="transform:scaleX(1.045);transform-origin:0 50%;">3COM</span></div>
<div class="c r " style="left:544px;width:70px;top:154.5px"><span class="x" style="transform:scaleX(1.218);transform-origin:100% 50%;">493.2800</span></div>
<div class="c r red" style="left:616px;width:62px;top:154.5px"><span class="x" style="transform:scaleX(1.055);transform-origin:100% 50%;">15.0000</span></div>
<div class="c r " style="left:680px;width:66px;top:154.5px"><span class="x" style="transform:scaleX(1.218);transform-origin:100% 50%;">100.0000</span></div>
<div class="c " style="left:751px;top:154.5px"><span class="x" style="transform:scaleX(1.051);transform-origin:0 50%;">EUR</span></div>
<div class="c r " style="left:944px;width:42px;top:154.5px"><span class="x" style="transform:scaleX(1.209);transform-origin:100% 50%;">4.3562</span></div>
<div class="c " style="left:991px;top:148.5px"><span class="x" style="transform:scaleX(1.124);transform-origin:0 50%;">factura</span><br><span class="x" style="transform:scaleX(1.113);transform-origin:0 50%;">externa</span></div>
<div class="c " style="left:1055px;top:154.5px"><span class="x" style="transform:scaleX(1.16);transform-origin:0 50%;letter-spacing:0.18px;">Introdus</span></div>
<div class="c " style="left:1109px;top:154.5px"><span class="x" style="transform:scaleX(1.09);transform-origin:0 50%;">Raiciu Adina</span></div>
<svg style="left:1372px;top:150px" width="18" height="18" viewBox="0 0 18 18"><rect x="0" y="0" width="18" height="18" fill="url(#pbg)"/><path d="M0.5 17.5H17.5V0.5" fill="none" stroke="#aab7cf"/><path d="M0.5 17V0.5H17" fill="none" stroke="#dde2e6"/><rect x="5" y="3.6" width="7.8" height="4" fill="#e6ecf5"/><path d="M11 3.6l1.8 1.6v2.4h-1.8z" fill="#a9b9d4"/><rect x="3.6" y="7.8" width="11" height="5" fill="#7f98bf"/><rect x="3.6" y="7.8" width="11" height="1" fill="#6b86b2"/><rect x="12" y="9.6" width="1.6" height="1.6" fill="#d4deee"/><rect x="5" y="13" width="7.8" height="2" fill="#f6f8fb"/></svg>
<svg style="left:1580px;top:150px" width="18" height="18" viewBox="0 0 18 18"><rect x="0" y="0" width="18" height="18" fill="url(#hbg)"/><path d="M0.5 17.5H17.5V0.5" fill="none" stroke="#b3bbd2"/><path d="M2.5 3.5H15M2.5 5.5H14.5M2.5 7.5H7M2.5 10H6" stroke="#4e5a5e" stroke-width="1"/><path d="M6 4.6L7.6 4.4L9.7 8L11.2 7.2L12.6 7.6L13.9 8.1L14.9 9.6V13L13.6 15.1L10.6 15.4L8.2 12.4L8.6 10.3z" fill="#f4f4f4" stroke="#6a6a6a" stroke-width="0.7"/></svg>
<div class="c r " style="left:63px;width:74px;top:183.5px"><span class="x" style="transform:scaleX(1.26);transform-origin:100% 50%;letter-spacing:0.5px;margin-right:-0.5px;">10/06/2016</span></div>
<div class="c " style="left:142px;top:183.5px"><span class="x" style="transform:scaleX(1.16);transform-origin:0 50%;letter-spacing:0.1px;">FAU45,NIR1081</span></div>
<div class="c r " style="left:239px;width:74px;top:183.5px"><span class="x" style="transform:scaleX(1.26);transform-origin:100% 50%;letter-spacing:0.5px;margin-right:-0.5px;">10/06/2016</span></div>
<div class="c r " style="left:315px;width:74px;top:183.5px"><span class="x" style="transform:scaleX(1.26);transform-origin:100% 50%;letter-spacing:0.5px;margin-right:-0.5px;">10/06/2016</span></div>
<div class="c " style="left:394px;top:183.5px"><span class="x" style="transform:scaleX(1.103);transform-origin:0 50%;">Pink dolls - Pink dolls</span></div>
<div class="c r " style="left:544px;width:70px;top:183.5px"><span class="x" style="transform:scaleX(1.218);transform-origin:100% 50%;">462.7800</span></div>
<div class="c r red" style="left:616px;width:62px;top:183.5px"><span class="x" style="transform:scaleX(1.055);transform-origin:100% 50%;">22.0000</span></div>
<div class="c r " style="left:680px;width:66px;top:183.5px"><span class="x" style="transform:scaleX(1.218);transform-origin:100% 50%;">100.0000</span></div>
<div class="c " style="left:751px;top:183.5px"><span class="x" style="transform:scaleX(1.051);transform-origin:0 50%;">EUR</span></div>
<div class="c r " style="left:944px;width:42px;top:183.5px"><span class="x" style="transform:scaleX(1.209);transform-origin:100% 50%;">4.3562</span></div>
<div class="c " style="left:991px;top:177.5px"><span class="x" style="transform:scaleX(1.124);transform-origin:0 50%;">factura</span><br><span class="x" style="transform:scaleX(1.113);transform-origin:0 50%;">externa</span></div>
<div class="c " style="left:1055px;top:183.5px"><span class="x" style="transform:scaleX(1.16);transform-origin:0 50%;letter-spacing:0.18px;">Introdus</span></div>
<div class="c " style="left:1109px;top:183.5px"><span class="x" style="transform:scaleX(1.09);transform-origin:0 50%;">Raiciu Adina</span></div>
<svg style="left:1372px;top:179px" width="18" height="18" viewBox="0 0 18 18"><rect x="0" y="0" width="18" height="18" fill="url(#pbg)"/><path d="M0.5 17.5H17.5V0.5" fill="none" stroke="#aab7cf"/><path d="M0.5 17V0.5H17" fill="none" stroke="#dde2e6"/><rect x="5" y="3.6" width="7.8" height="4" fill="#e6ecf5"/><path d="M11 3.6l1.8 1.6v2.4h-1.8z" fill="#a9b9d4"/><rect x="3.6" y="7.8" width="11" height="5" fill="#7f98bf"/><rect x="3.6" y="7.8" width="11" height="1" fill="#6b86b2"/><rect x="12" y="9.6" width="1.6" height="1.6" fill="#d4deee"/><rect x="5" y="13" width="7.8" height="2" fill="#f6f8fb"/></svg>
<svg style="left:1580px;top:179px" width="18" height="18" viewBox="0 0 18 18"><rect x="0" y="0" width="18" height="18" fill="url(#hbg)"/><path d="M0.5 17.5H17.5V0.5" fill="none" stroke="#b3bbd2"/><path d="M2.5 3.5H15M2.5 5.5H14.5M2.5 7.5H7M2.5 10H6" stroke="#4e5a5e" stroke-width="1"/><path d="M6 4.6L7.6 4.4L9.7 8L11.2 7.2L12.6 7.6L13.9 8.1L14.9 9.6V13L13.6 15.1L10.6 15.4L8.2 12.4L8.6 10.3z" fill="#f4f4f4" stroke="#6a6a6a" stroke-width="0.7"/></svg>
<div class="c r " style="left:63px;width:74px;top:212.5px"><span class="x" style="transform:scaleX(1.26);transform-origin:100% 50%;letter-spacing:0.5px;margin-right:-0.5px;">09/06/2016</span></div>
<div class="c " style="left:142px;top:212.5px"><span class="x" style="transform:scaleX(1.16);transform-origin:0 50%;letter-spacing:0.35px;">NIR1079</span></div>
<div class="c r " style="left:239px;width:74px;top:212.5px"><span class="x" style="transform:scaleX(1.26);transform-origin:100% 50%;letter-spacing:0.5px;margin-right:-0.5px;">09/06/2016</span></div>
<div class="c r " style="left:315px;width:74px;top:212.5px"><span class="x" style="transform:scaleX(1.26);transform-origin:100% 50%;letter-spacing:0.5px;margin-right:-0.5px;">09/06/2016</span></div>
<div class="c " style="left:394px;top:212.5px"><span class="x" style="transform:scaleX(1.045);transform-origin:0 50%;">3COM</span></div>
<div class="c r " style="left:544px;width:70px;top:212.5px"><span class="x" style="transform:scaleX(1.218);transform-origin:100% 50%;">992.0700</span></div>
<div class="c r red" style="left:616px;width:62px;top:212.5px"><span class="x" style="transform:scaleX(1.055);transform-origin:100% 50%;">417.9800</span></div>
<div class="c r " style="left:680px;width:66px;top:212.5px"><span class="x" style="transform:scaleX(1.218);transform-origin:100% 50%;">617.4800</span></div>
<div class="c " style="left:751px;top:212.5px"><span class="x" style="transform:scaleX(1.051);transform-origin:0 50%;">EUR</span></div>
<div class="c r " style="left:944px;width:42px;top:212.5px"><span class="x" style="transform:scaleX(1.209);transform-origin:100% 50%;">4.3562</span></div>
<div class="c " style="left:991px;top:206.5px"><span class="x" style="transform:scaleX(1.124);transform-origin:0 50%;">factura</span><br><span class="x" style="transform:scaleX(1.113);transform-origin:0 50%;">externa</span></div>
<div class="c " style="left:1055px;top:212.5px"><span class="x" style="transform:scaleX(1.16);transform-origin:0 50%;letter-spacing:0.18px;">Introdus</span></div>
<div class="c " style="left:1109px;top:212.5px"><span class="x" style="transform:scaleX(1.09);transform-origin:0 50%;">Raiciu Adina</span></div>
<svg style="left:1372px;top:208px" width="18" height="18" viewBox="0 0 18 18"><rect x="0" y="0" width="18" height="18" fill="url(#pbg)"/><path d="M0.5 17.5H17.5V0.5" fill="none" stroke="#aab7cf"/><path d="M0.5 17V0.5H17" fill="none" stroke="#dde2e6"/><rect x="5" y="3.6" width="7.8" height="4" fill="#e6ecf5"/><path d="M11 3.6l1.8 1.6v2.4h-1.8z" fill="#a9b9d4"/><rect x="3.6" y="7.8" width="11" height="5" fill="#7f98bf"/><rect x="3.6" y="7.8" width="11" height="1" fill="#6b86b2"/><rect x="12" y="9.6" width="1.6" height="1.6" fill="#d4deee"/><rect x="5" y="13" width="7.8" height="2" fill="#f6f8fb"/></svg>
<svg style="left:1580px;top:208px" width="18" height="18" viewBox="0 0 18 18"><rect x="0" y="0" width="18" height="18" fill="url(#hbg)"/><path d="M0.5 17.5H17.5V0.5" fill="none" stroke="#b3bbd2"/><path d="M2.5 3.5H15M2.5 5.5H14.5M2.5 7.5H7M2.5 10H6" stroke="#4e5a5e" stroke-width="1"/><path d="M6 4.6L7.6 4.4L9.7 8L11.2 7.2L12.6 7.6L13.9 8.1L14.9 9.6V13L13.6 15.1L10.6 15.4L8.2 12.4L8.6 10.3z" fill="#f4f4f4" stroke="#6a6a6a" stroke-width="0.7"/></svg>
</div>
<div style="position:absolute;left:1603px;top:289px;width:1px;height:236px;background:#c9d7ee"></div>
<div id="menu"><div class="strip"></div><div class="sep"></div>
<div class="mi" style="top:4px"><span class="x" style="transform:scaleX(1.143);transform-origin:0 50%;">Informatii</span></div>
<div class="mi" style="top:22px"><span class="x" style="transform:scaleX(1.062);transform-origin:0 50%;">Modificare</span></div>
<div class="mi" style="top:40px"><span class="x" style="transform:scaleX(1.082);transform-origin:0 50%;">Contare</span></div>
<div class="mi" style="top:58px"><span class="x" style="transform:scaleX(1.075);transform-origin:0 50%;">Duplicare</span></div>
<div class="mi" style="top:76px"><span class="x" style="transform:scaleX(1.056);transform-origin:0 50%;">Documente</span></div>
<div class="mi" style="top:96px"><span class="x" style="transform:scaleX(1.102);transform-origin:0 50%;">Poziții</span></div>
<div class="mi" style="top:114px"><span class="x" style="transform:scaleX(1.1);transform-origin:0 50%;">Ștergere</span></div>
<svg style="left:3.3px;top:2.3px" width="13.4" height="13.4" viewBox="0 0 14 14"><defs><radialGradient id="ig" cx="45%" cy="25%" r="80%"><stop offset="0" stop-color="#a8c8ff"/><stop offset="0.45" stop-color="#4b86f6"/><stop offset="1" stop-color="#1438d0"/></radialGradient></defs><circle cx="7" cy="7" r="6.6" fill="url(#ig)" stroke="#a9bdf2" stroke-width="0.8"/><ellipse cx="7" cy="3.6" rx="4.4" ry="2.4" fill="#ffffff" opacity="0.28"/><text x="4.6" y="11.2" font-family="Liberation Serif" font-style="italic" font-weight="bold" font-size="12" fill="#fff">i</text></svg>
<svg style="left:3.3px;top:20.2px" width="14" height="14" viewBox="0 0 14 14"><path d="M0.8 13.2L2 9.2L9.6 1.6L12.4 4.4L4.8 12z" fill="#f2820e"/><path d="M2 9.2L9.6 1.6L10.6 2.6L3 10.2z" fill="#ffb04a"/><path d="M3.8 11L11.4 3.4L12.4 4.4L4.8 12z" fill="#d86a08"/><path d="M9.6 1.6L10.9 0.4C11.4 0 12 0 12.4 0.4L13.6 1.6C14 2 14 2.6 13.6 3.1L12.4 4.4z" fill="#ea7a92"/><path d="M0.8 13.2L2 9.2L4.8 12z" fill="#f6e2c0"/><path d="M0.8 13.2L1.3 11.5L2.5 12.7z" fill="#3a3a3a"/></svg>
<svg style="left:3px;top:55.8px" width="14.4" height="14" viewBox="0 0 14.4 14"><defs><linearGradient id="tg" x1="0" y1="0" x2="0" y2="1"><stop offset="0" stop-color="#58dcd8"/><stop offset="0.3" stop-color="#22b8b8"/><stop offset="1" stop-color="#0e9298"/></linearGradient></defs><rect x="0.4" y="0.4" width="9" height="8" rx="0.6" fill="url(#tg)" stroke="#14989c" stroke-width="0.8"/><rect x="4.8" y="5.2" width="9.2" height="8.2" rx="0.6" fill="url(#tg)" stroke="#0f8a90" stroke-width="0.8"/></svg>
<svg style="left:4px;top:74px" width="13" height="14" viewBox="0 0 13 14"><path d="M3.6 9.6L9.2 3.6a1.55 1.55 0 0 1 2.3 2.1L5.4 12.3a2.45 2.45 0 0 1-3.7-3.2L7.6 2.6a3.2 3.2 0 0 1 4.6-0.4" fill="none" stroke="#7fb0dc" stroke-width="1.15" stroke-linecap="round"/><path d="M4.2 10.2L9.8 4.2" fill="none" stroke="#cfe2f4" stroke-width="0.6"/></svg>
<svg style="left:3.5px;top:93px" width="14" height="14" viewBox="0 0 14 14"><path d="M0.8 0.6H7L10.4 4V12.6H0.8z" fill="#dfe9fb" stroke="#9db4e4" stroke-width="0.7"/><path d="M7 0.6V4H10.4z" fill="#ffffff" stroke="#9db4e4" stroke-width="0.7"/><rect x="0.4" y="5.6" width="10.4" height="1.8" fill="#14187a"/><rect x="2.2" y="8.4" width="5" height="3.4" fill="#b9cdf3"/><path d="M7.6 7.4L11.2 7L13.6 10.4L11.6 13.6L8.6 13.2L7 10z" fill="#7ad862" stroke="#3aa02c" stroke-width="0.6"/><path d="M9 8.8L11.8 11.6M11.8 9.4V11.6H9.6" stroke="#fff" stroke-width="1" fill="none"/></svg>
<svg style="left:4.3px;top:112.5px" width="12" height="11.6" viewBox="0 0 12 11.6"><path d="M1.6 1.4L10.4 10.2M10.4 1.4L1.6 10.2" stroke="#cc1a1a" stroke-width="3" stroke-linecap="round"/><path d="M1.9 1.5L5.5 5.1" stroke="#ec6a6a" stroke-width="0.8" stroke-linecap="round"/></svg>
</div>
</div></body></html>
